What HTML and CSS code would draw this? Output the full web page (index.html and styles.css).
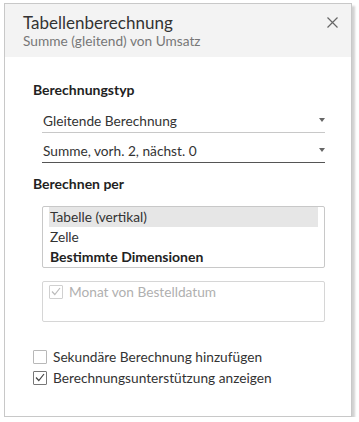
FILE: index.html
```html
<!DOCTYPE html>
<html lang="de">
<head>
<meta charset="utf-8">
<link rel="stylesheet" href="styles.css">
</head>
<body>
<div class="panel">
  <div class="header">
    <div class="titles">
      <div class="title">Tabellenberechnung</div>
      <div class="subtitle">Summe (gleitend) von Umsatz</div>
    </div>
    <svg class="close" width="11" height="11" viewBox="0 0 11 11"><path d="M0.5 0.5 L10.5 10.5 M10.5 0.5 L0.5 10.5" stroke="#666" stroke-width="1.2" fill="none"/></svg>
  </div>
  <div class="body">
    <div class="label">Berechnungstyp</div>
    <div class="select first">
      <span>Gleitende Berechnung</span>
      <span class="arrow"></span>
    </div>
    <div class="select focused">
      <span>Summe, vorh. 2, nächst. 0</span>
      <span class="arrow"></span>
    </div>
    <div class="label label2">Berechnen per</div>
    <div class="listbox">
      <div class="item selected">Tabelle (vertikal)</div>
      <div class="item">Zelle</div>
      <div class="item bold">Bestimmte Dimensionen</div>
    </div>
    <div class="dimbox">
      <div class="check-row disabled">
        <span class="cb checked"><svg width="10" height="9" viewBox="0 0 10 9"><path d="M1 4.5 L3.8 7.5 L9 1" stroke="currentColor" stroke-width="1.2" fill="none"/></svg></span>
        <span>Monat von Bestelldatum</span>
      </div>
    </div>
    <div class="options">
      <div class="check-row">
        <span class="cb"></span>
        <span>Sekundäre Berechnung hinzufügen</span>
      </div>
      <div class="check-row">
        <span class="cb checked"><svg width="10" height="9" viewBox="0 0 10 9"><path d="M1 4.5 L3.8 7.5 L9 1" stroke="currentColor" stroke-width="1.2" fill="none"/></svg></span>
        <span>Berechnungsunterstützung anzeigen</span>
      </div>
    </div>
  </div>
</div>
</body>
</html>
```
FILE: styles.css
```css
* { box-sizing: border-box; }
html, body { margin: 0; padding: 0; background: #fff; }
body {
  font-family: Lato, "Open Sans", sans-serif;
  color: #333;
  padding: 3px 0 0 4px;
}
.panel {
  width: 348px;
  height: 414px;
  border: 1px solid #c8c8c8;
  background: #fff;
  box-shadow: 3px 3px 2px rgba(0,0,0,0.18);
  display: flex;
  flex-direction: column;
}
.header {
  background: #f3f3f3;
  height: 53px;
  flex: none;
  display: flex;
  justify-content: space-between;
  align-items: flex-start;
  padding: 9px 13px 0 18px;
}
.title {
  font-size: 17px;
  color: #333;
  line-height: 20px;
}
.subtitle {
  font-size: 13.7px;
  color: #777;
  line-height: 16px;
  margin-top: 0;
}
.close { margin-top: 4px; }
.body {
  padding: 25px 26px 0 28px;
  display: flex;
  flex-direction: column;
}
.label {
  font-weight: bold;
  font-size: 14px;
  color: #222;
  line-height: 16px;
}
.label2 { margin-top: 13px; }
.select {
  margin-left: 9px;
  height: 30px;
  border-bottom: 1px solid #c8c8c8;
  display: flex;
  align-items: center;
  justify-content: space-between;
  font-size: 13.7px;
  color: #333;
  padding: 5px 0 0 1px;
}
.select.first { margin-top: 5px; }
.select.focused { border-bottom: 1px solid #555; }
.arrow {
  width: 0; height: 0;
  border-left: 3.5px solid transparent;
  border-right: 3.5px solid transparent;
  border-top: 4px solid #666;
  margin-right: 0;
}
.listbox {
  margin: 14px 0 0 9px;
  border: 1px solid #c8c8c8;
  border-radius: 2px;
  height: 62px;
  padding: 0 6px;
}
.item {
  font-size: 13.7px;
  line-height: 20px;
  padding-left: 1px;
  color: #333;
}
.item.selected { background: #e6e6e6; }
.item.bold { font-weight: bold; font-size: 14px; color: #222; line-height: 19px; }
.dimbox {
  margin: 13px 0 0 9px;
  border: 1px solid #d6d6d6;
  border-radius: 2px;
  height: 41px;
  padding: 0 6px;
}
.check-row {
  display: flex;
  align-items: center;
  gap: 6px;
  font-size: 13.7px;
  color: #333;
  height: 19px;
}
.cb {
  width: 14px;
  height: 14px;
  border: 1px solid #b8b8b8;
  border-radius: 1px;
  display: flex;
  align-items: center;
  justify-content: center;
  color: #444;
  flex: none;
}
.check-row .cb.checked { border-color: #777; }
.check-row.disabled { color: #b0b0b0; }
.check-row.disabled .cb { border-color: #d0d0d0; color: #bbb; }
.options {
  margin-top: 25px;
  display: flex;
  flex-direction: column;
  gap: 2px;
}
```
